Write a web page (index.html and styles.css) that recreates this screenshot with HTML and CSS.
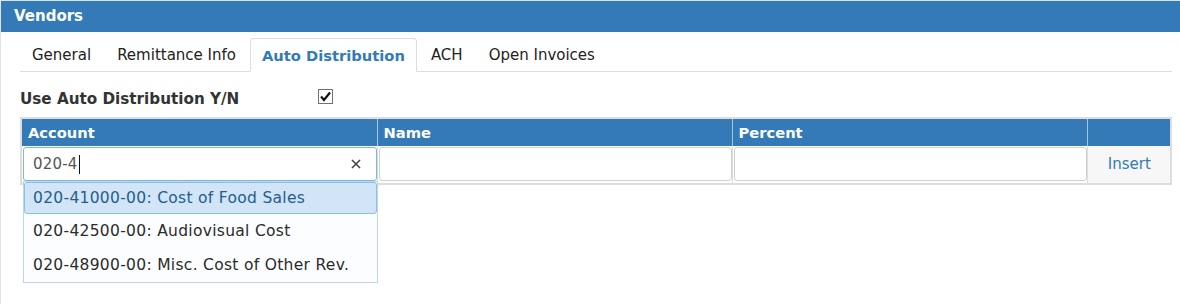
FILE: index.html
```
<!DOCTYPE html>
<html lang="en">
<head>
    <meta charset="UTF-8">
    <title>Vendors</title>
    <link rel="stylesheet" href="styles.css">
</head>
<body>

<div class="panel">
    <div class="panel-heading">Vendors</div>

    <div class="panel-body">
        <ul class="tabs">
            <li><a href="#">General</a></li>
            <li><a href="#">Remittance Info</a></li>
            <li class="active"><a href="#">Auto Distribution</a></li>
            <li><a href="#">ACH</a></li>
            <li><a href="#">Open Invoices</a></li>
        </ul>

        <div class="check-row">
            <span class="check-label">Use Auto Distribution Y/N</span>
            <span class="checkbox">
                <svg width="13" height="13" viewBox="0 0 13 13">
                    <path d="M2 6.5 L5 10 L11 2.5" fill="none" stroke="#111" stroke-width="2.2"/>
                </svg>
            </span>
        </div>

        <table class="dist-table">
            <colgroup>
                <col style="width: 356px">
                <col style="width: 355px">
                <col style="width: 355px">
                <col>
            </colgroup>
            <thead>
                <tr>
                    <th>Account</th>
                    <th>Name</th>
                    <th>Percent</th>
                    <th></th>
                </tr>
            </thead>
            <tbody>
                <tr>
                    <td class="account-cell">
                        <div class="field focused">
                            <span class="field-text">020-4</span><span class="caret"></span>
                            <span class="clear">
                                <svg width="10" height="10" viewBox="0 0 10 10">
                                    <path d="M1 1 L9 9 M9 1 L1 9" stroke="#444" stroke-width="1.6"/>
                                </svg>
                            </span>
                        </div>
                        <!-- список подсказок -->
                        <ul class="suggest">
                            <li class="selected">020-41000-00: Cost of Food Sales</li>
                            <li>020-42500-00: Audiovisual Cost</li>
                            <li>020-48900-00: Misc. Cost of Other Rev.</li>
                        </ul>
                    </td>
                    <td><div class="field"></div></td>
                    <td><div class="field"></div></td>
                    <td class="insert-cell"><a href="#">Insert</a></td>
                </tr>
            </tbody>
        </table>
    </div>
</div>

</body>
</html>
```

FILE: styles.css
```
html, body {
    margin: 0;
    padding: 0;
    background-color: #ffffff;
    font-family: "DejaVu Sans", Verdana, sans-serif;
    color: #333333;
}

.panel {
    height: 304px;
    box-sizing: border-box;
    border-top: 1px solid #d6e4f2;
    border-left: 1px solid #e3e3e3;
}

.panel-heading {
    height: 31px;
    line-height: 31px;
    padding-left: 13px;
    background-color: #337ab7;
    color: #ffffff;
    font-weight: bold;
    font-size: 15px;
}

.panel-body {
    padding: 6px 8px 0 19px;
}

/* Вкладки */
.tabs {
    display: flex;
    margin: 0;
    padding: 0;
    list-style: none;
    border-bottom: 1px solid #dddddd;
}

.tabs li {
    margin-bottom: -1px;
    margin-right: 2px;
}

.tabs a {
    display: block;
    padding: 8px 11px 7px;
    line-height: 17px;
    font-size: 15px;
    color: #222222;
    text-decoration: none;
    border: 1px solid transparent;
    border-radius: 4px 4px 0 0;
}

.tabs .active a {
    color: #337ab7;
    font-weight: bold;
    font-size: 14.7px;
    background-color: #ffffff;
    border-color: #dddddd #dddddd transparent;
}

/* Флажок */
.check-row {
    display: flex;
    align-items: center;
    height: 24px;
    margin-top: 15px;
}

.check-label {
    width: 298px;
    font-weight: bold;
    font-size: 15.2px;
    color: #333333;
}

.checkbox {
    display: flex;
    align-items: center;
    justify-content: center;
    width: 13px;
    height: 13px;
    border: 1px solid #707070;
    margin-top: -5px;
}

/* Таблица */
.dist-table {
    width: 1152px;
    margin-top: 6px;
    border-collapse: collapse;
    border: 2px solid #dddddd;
    table-layout: fixed;
}

.dist-table th {
    height: 27px;
    padding: 0 0 0 6px;
    text-align: left;
    background-color: #337ab7;
    color: #ffffff;
    font-size: 14.7px;
    font-weight: bold;
    border-left: 1px solid #a8c4e0;
}

.dist-table th:first-child {
    border-left: none;
}

.dist-table td {
    height: 36px;
    padding: 1px 0 0 1px;
    border-left: 1px solid #dddddd;
    vertical-align: top;
}

.dist-table td:first-child {
    border-left: none;
}

.account-cell {
    position: relative;
}

.field {
    display: flex;
    align-items: center;
    height: 32px;
    padding: 0 9px;
    border: 1px solid #d0d0d0;
    border-radius: 3px;
    background-color: #ffffff;
    font-size: 15px;
    color: #555555;
}

.field.focused {
    border-color: #7db6e6;
}

.field-text {
    line-height: 18px;
    letter-spacing: 0.2px;
}

.caret {
    width: 1px;
    height: 19px;
    margin-left: 1px;
    background-color: #111111;
}

.clear {
    display: flex;
    margin-left: auto;
    margin-right: 6px;
}

.insert-cell {
    background-color: #f7f7f7;
    text-align: center;
}

.insert-cell a {
    display: block;
    line-height: 34px;
    color: #337ab7;
    text-decoration: none;
    font-size: 15px;
}

/* Подсказки */
.suggest {
    position: absolute;
    top: 35px;
    left: 1px;
    width: 355px;
    box-sizing: border-box;
    margin: 0;
    padding: 0;
    list-style: none;
    background-color: #fbfdfe;
    border: 1px solid #bcd6ee;
    z-index: 2;
}

.suggest li {
    height: 32px;
    line-height: 32px;
    padding: 0 8px;
    font-size: 15.5px;
    letter-spacing: 0.3px;
    color: #2b2b2b;
    border: 1px solid transparent;
    white-space: nowrap;
}

.suggest li.selected {
    height: 30px;
    line-height: 30px;
    background-color: #d2e5f6;
    border-color: #8fbfe6;
    border-radius: 3px;
    color: #245d8f;
}
```
